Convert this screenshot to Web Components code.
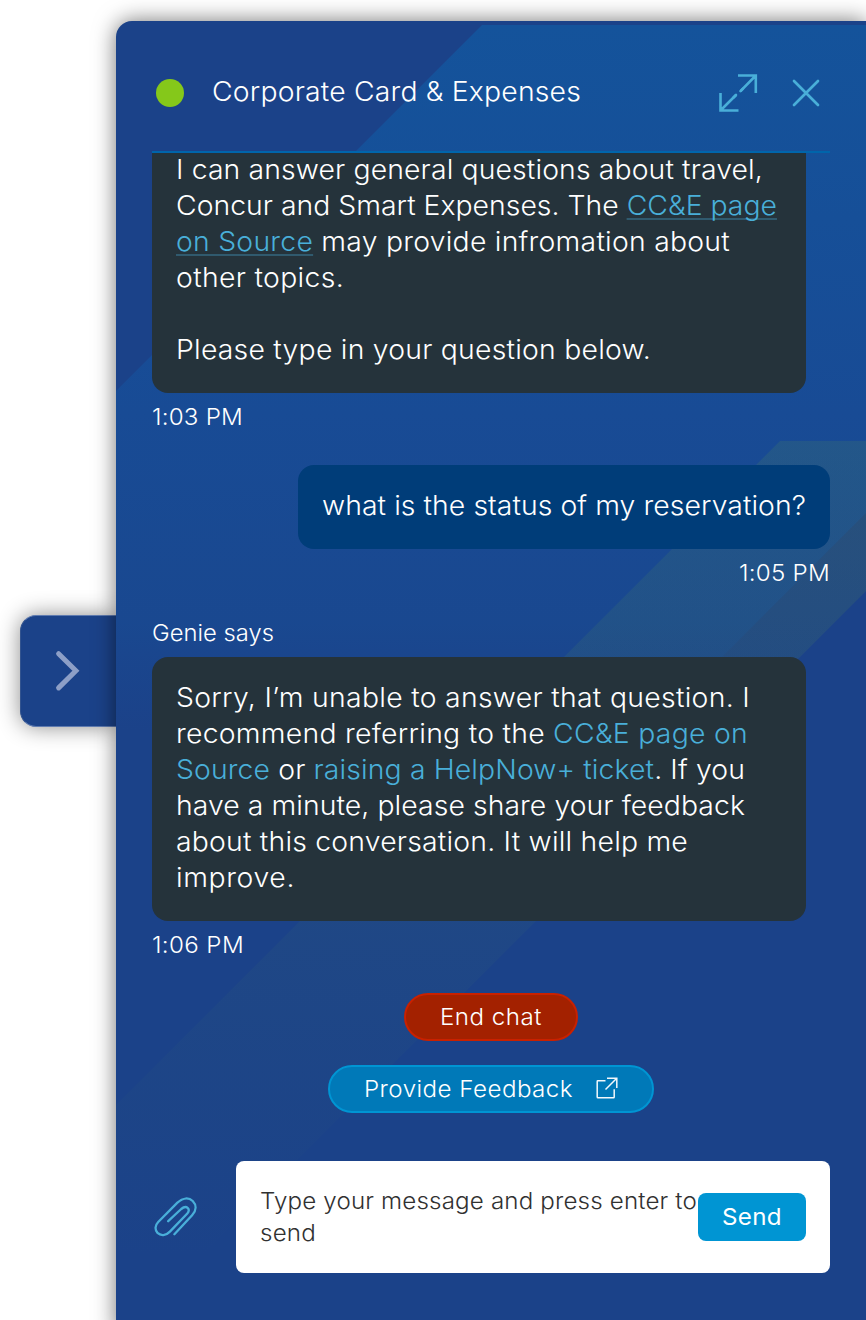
<!DOCTYPE html>
<html lang="en">
<head>
<meta charset="utf-8">
<title>Corporate Card &amp; Expenses</title>
<style>
html,body{margin:0;height:1320px;overflow:hidden;background:#fff}
body{font-family:Inter,"Open Sans",sans-serif;font-weight:300;color:#fff}
a{color:#49afd9;text-decoration:none}
a.u{text-decoration:underline;text-decoration-color:rgba(73,175,217,.32);text-decoration-thickness:2px;text-underline-offset:3px;text-decoration-skip-ink:none}
</style>
</head>
<body>
<chat-dock>
  <dock-tab slot="tab"></dock-tab>
  <chat-panel>
    <chat-header slot="header"><fit-line w="369">Corporate Card &amp; Expenses</fit-line></chat-header>
    <chat-message class="clipped" time="1:03 PM" tw="91">
      <fit-line w="587">I can answer general questions about travel,</fit-line>
      <fit-line w="601">Concur and Smart Expenses. The <a class="u">CC&amp;E page</a></fit-line>
      <fit-line w="554"><a class="u">on Source</a> may provide infromation about</fit-line>
      <fit-line w="168">other topics.</fit-line>
      <fit-line w="0">&nbsp;</fit-line>
      <fit-line w="475">Please type in your question below.</fit-line>
    </chat-message>
    <chat-message class="mine" time="1:05 PM" tw="91">
      <fit-line w="484">what is the status of my reservation?</fit-line>
    </chat-message>
    <chat-message author="Genie says" aw="122" time="1:06 PM" tw="92">
      <fit-line w="574">Sorry, I’m unable to answer that question. I</fit-line>
      <fit-line w="572">recommend referring to the <a>CC&amp;E page on</a></fit-line>
      <fit-line w="569"><a>Source</a> or <a>raising a HelpNow+ ticket</a>. If you</fit-line>
      <fit-line w="569">have a minute, please share your feedback</fit-line>
      <fit-line w="512">about this conversation. It will help me</fit-line>
      <fit-line w="119">improve.</fit-line>
    </chat-message>
    <pill-button slot="actions" class="danger"><fit-line w="102">End chat</fit-line></pill-button>
    <pill-button slot="actions" class="info" external><fit-line w="209">Provide Feedback</fit-line></pill-button>
    <chat-composer slot="composer">
      <fit-line w="437">Type your message and press enter to</fit-line>
      <fit-line w="56">send</fit-line>
      <fit-line slot="send" w="60">Send</fit-line>
    </chat-composer>
  </chat-panel>
</chat-dock>
<script>
const define=(name,html,setup)=>customElements.define(name,class extends HTMLElement{
  connectedCallback(){
    if(this.shadowRoot)return;
    const root=this.attachShadow({mode:'open'});
    const t=document.createElement('template');
    t.innerHTML=html;
    root.append(t.content.cloneNode(true));
    if(setup)setup(this,root);
  }
});

define('chat-dock',`<style>
:host{display:flex;align-items:flex-start;width:866px;height:1320px;overflow:hidden;padding-left:20px;box-sizing:border-box}
::slotted(chat-panel){position:relative}
</style><slot name="tab"></slot><slot></slot>`);

define('dock-tab',`<style>
:host{display:flex;align-items:center;justify-content:center;width:96px;height:112px;box-sizing:border-box;margin-top:615px;background:#1b4289;border-radius:16px 0 0 16px;border:1px solid #5f7bb0;border-right:0;border-left-color:#33548f;box-shadow:0 0 22px rgba(0,0,0,.45);flex:none}
svg{display:block;margin-right:2px}
</style><svg width="28" height="42" viewBox="0 0 28 42" fill="none" stroke="#8d9fc7" stroke-width="5" stroke-linecap="round" stroke-linejoin="miter"><path d="M4.6 3.7 21.9 20.8 4.6 37.9"/></svg>`);

define('chat-panel',`<style>
:host{display:block;flex:none;width:750px;height:1312px;margin-top:21px;background:#1b4289;border-radius:16px 0 0 0;box-shadow:0 0 22px rgba(0,0,0,.55);box-sizing:border-box;padding:0 36px}
.bg{position:absolute;inset:0;border-radius:16px 0 0 0}
.body{position:relative}
.list{display:flex;flex-direction:column;gap:36px;overflow:hidden}
.actions{display:flex;flex-direction:column;align-items:center;gap:24px;margin:36px 0 48px}
</style>
<svg class="bg" width="750" height="1299" viewBox="116 21 750 1299">
<defs>
<linearGradient id="a" gradientUnits="userSpaceOnUse" x1="0" y1="25" x2="0" y2="730"><stop offset="0" stop-color="#14539b"/><stop offset=".55" stop-color="#184b95"/><stop offset=".85" stop-color="#194991" stop-opacity=".85"/><stop offset="1" stop-color="#1a4790" stop-opacity="0"/></linearGradient>
<linearGradient id="b" gradientUnits="userSpaceOnUse" x1="0" y1="441" x2="0" y2="1260"><stop offset="0" stop-color="#437b68" stop-opacity=".25"/><stop offset="1" stop-color="#437465" stop-opacity="0"/></linearGradient>
<linearGradient id="c" gradientUnits="userSpaceOnUse" x1="0" y1="513" x2="0" y2="730"><stop offset="0" stop-color="#2c5275" stop-opacity=".4"/><stop offset="1" stop-color="#2c5275" stop-opacity="0"/></linearGradient>
</defs>
<path fill="url(#a)" d="M482 25H866V513L116 1263V391Z"/>
<path fill="url(#b)" d="M780 441H866V591L137 1320H116V1105Z"/>
<path fill="url(#c)" d="M866 513V591L727 730H649Z"/>
</svg>
<div class="body"><slot name="header"></slot><div class="list"><slot></slot></div><div class="actions"><slot name="actions"></slot></div><slot name="composer"></slot></div>`);

define('chat-header',`<style>
:host{display:flex;align-items:center;height:132px;box-sizing:border-box;padding:14px 10px 0 4px;border-bottom:2px solid #0065ab;font-size:27px;line-height:36px}
.dot{width:28px;height:28px;border-radius:50%;background:#85c81a;margin-right:28px}
.title{flex:1;margin-top:-2px}
svg{display:block;fill:none;stroke:#49afd9}
.x{margin-left:34px}
</style><span class="dot"></span><span class="title"><slot></slot></span>
<svg width="39" height="38" viewBox="0 0 39 38" stroke-width="2.6"><path d="M19 1.5H36.8V19M36.3 2 21.5 17.2M1.5 19V36.5H19.5M2 36 17 21" /><path stroke-linecap="round" d="M21.5 17.2 24 14.7M17 21 14.5 23.5"/></svg>
<svg class="x" width="28" height="28" viewBox="0 0 28 28" stroke-width="2.7" stroke-linecap="round"><path d="M2 2 26 26M26 2 2 26"/></svg>`);

define('chat-message',`<style>
:host{display:flex;flex-direction:column;align-items:flex-start;gap:12px}
:host(.mine){align-items:flex-end}
.bubble{box-sizing:border-box;width:654px;padding:23px 24px 25px;border-radius:16px;background:#25333b;font-size:27px;line-height:36px}
:host(.clipped) .bubble{padding-top:0;border-radius:0 0 16px 16px}
:host(.clipped) slot{display:block;margin-top:-1px}
:host(.mine) .bubble{width:532px;background:#003d79}
.meta{display:block;height:24px;font-size:23px;line-height:24px}
.meta:empty{display:none}
</style><span class="meta author"></span><div class="bubble"><slot></slot></div><span class="meta time"></span>`,(el,root)=>{
  const put=(sel,text,w)=>{
    if(!text)return;
    const f=document.createElement('fit-line');
    f.setAttribute('w',w);
    f.textContent=text;
    root.querySelector(sel).append(f);
  };
  put('.author',el.getAttribute('author'),el.getAttribute('aw'));
  put('.time',el.getAttribute('time'),el.getAttribute('tw'));
});

define('pill-button',`<style>
:host{display:flex;align-items:center;box-sizing:border-box;height:48px;padding:0 34px;border:2px solid;border-radius:24px;font-size:23px;line-height:32px}
:host(.danger){width:174px;background:#a32100;border-color:#c92100}
:host(.info){width:326px;background:#0079b8;border-color:#0095d3}
svg{display:none;margin-left:23px;margin-top:-2px;flex:none}
:host([external]) svg{display:block}
</style><slot></slot><svg width="22" height="22" viewBox="0 0 22 22" fill="none" stroke="#f2f8fc" stroke-width="1.5"><path d="M9.5 3.8H1.8Q1.2 3.8 1.2 4.4V20Q1.2 20.8 2 20.8H17.5Q18.2 20.8 18.2 20V12.3M11 1.2H20.8V11M20.5 1.5 9.5 12.5"/></svg>`);

define('chat-composer',`<style>
:host{display:flex;align-items:center;justify-content:space-between}
.clip{display:block;margin-left:2px}
.field{display:flex;align-items:center;box-sizing:border-box;width:594px;height:112px;padding:24px;border-radius:8px;background:#fff;color:#313131;font-size:23px;line-height:32px}
.text{width:438px;flex:none}
.send{display:flex;align-items:center;justify-content:center;width:108px;height:48px;flex:none;border-radius:8px;background:#0095d3;color:#fff;font-weight:400}
</style>
<svg class="clip" width="44" height="40" viewBox="0 0 44 40" fill="none" stroke="#49afd9" stroke-width="2.3" stroke-linecap="round"><path d="M14.2 24.2 27.2 12C32.7 7.4 36.8 12.2 33.3 16.5L15.9 34.6C11.8 39 6.6 38.9 3.5 35.9C.7 32.9 .9 28.4 4.2 25L23.4 5.6C29 .6 34.8 .3 38.7 4C42.5 7.9 42.7 13.2 38.1 18.3L20.4 37.2"/></svg>
<div class="field"><div class="text"><slot></slot></div><div class="send"><slot name="send"></slot></div></div>`);

/* One line of copy set to an exact measure: slightly widened letters plus tracking. */
define('fit-line',`<style>
:host{display:block;white-space:nowrap}
span{display:inline-block;vertical-align:top;transform-origin:0 50%}
</style><span><slot></slot></span>`,(el,root)=>{
  const w=+el.getAttribute('w'),s=root.querySelector('span');
  if(!w)return;
  const natural=s.getBoundingClientRect().width;
  const k=Math.min(1.05,Math.max(1,w/natural));
  el.style.letterSpacing=((w/k-natural)/el.textContent.length)+'px';
  el.style.width=w+'px';
  s.style.transform='scaleX('+k+')';
});
</script>
</body>
</html>
